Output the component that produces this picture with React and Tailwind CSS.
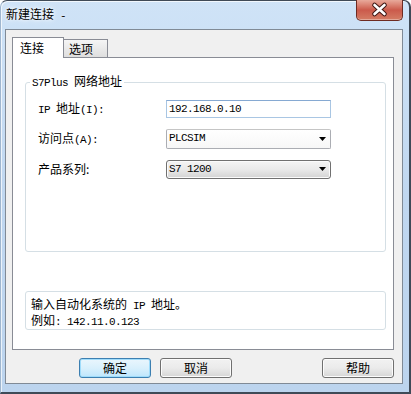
import React from 'react'

// ASCII runs get a half-width mono face, like SimSun's latin
function Mix({ text }) {
  const parts = text.split(/([\x20-\x7e]+)/)
  return parts.map((p, i) =>
    /^[\x20-\x7e]+$/.test(p) ? (
      <span key={i} className="font-['Liberation_Mono',monospace] text-[11px] tracking-[-0.6px]">
        {p}
      </span>
    ) : (
      <React.Fragment key={i}>{p}</React.Fragment>
    )
  )
}

function Arrow() {
  return (
    <svg width="7" height="4" viewBox="0 0 7 4">
      <polygon points="0,0 7,0 3.5,4" fill="#000" />
    </svg>
  )
}

function Button({ label, primary, className = '' }) {
  return (
    <button
      className={`h-[20px] w-[72px] rounded-[3px] border text-[12px] leading-none text-black ${
        primary
          ? 'border-[#3c7fb1] bg-gradient-to-b from-[#eaf6fd] via-[#d9f0fc] to-[#bee6fd] shadow-[inset_0_0_0_1px_#9fdcfb]'
          : 'border-[#707070] bg-gradient-to-b from-[#f2f2f2] via-[#ebebeb] to-[#d6d6d6] shadow-[inset_0_0_0_1px_#fcfcfc]'
      } ${className}`}
    >
      {label}
    </button>
  )
}

export default function App() {
  return (
    <div className="w-[411px] h-[394px] bg-white font-['Noto_Sans_CJK_SC',sans-serif] text-[12px] text-black">
      <div className="flex h-full flex-col rounded-t-[7px] border border-r-2 border-b-2 border-[#3f4a57] border-l-[#9fb6cf] bg-gradient-to-b from-[#cfe3f7] via-[#c0d7f0] to-[#bcd4ee] pl-[4px] pr-[6px] pb-[8px] shadow-[inset_1px_1px_0_rgba(255,255,255,0.7)]">
        {/* 标题栏 */}
        <div className="flex h-[28px] items-start justify-between">
          <span className="self-center pl-[1px] [text-shadow:0_0_6px_#fff,0_0_3px_#fff]">
            <Mix text="新建连接 -" />
          </span>
          <div className="-mt-px h-[21px] w-[47px] rounded-b-[5px] border border-t-0 border-[#6e2b22] bg-gradient-to-b from-[#e8a99b] via-[#cb5a4b] to-[#d47c64] shadow-[inset_0_-1px_0_rgba(255,255,255,0.35)]">
            <svg width="45" height="20" viewBox="0 0 45 20">
              <path d="M17.5 5 L27.5 14 M27.5 5 L17.5 14" stroke="#3b1512" strokeWidth="4.6" strokeLinecap="round" />
              <path d="M17.5 5 L27.5 14 M27.5 5 L17.5 14" stroke="#fff" strokeWidth="2.6" strokeLinecap="round" />
            </svg>
          </div>
        </div>

        {/* 客户区 */}
        <div className="flex flex-1 flex-col border border-[#808a96] bg-[#f0f0f0] pt-[7px]">
          <div className="ml-[6px] mr-[8px]">
            {/* 选项卡 */}
            <div className="relative z-10 -mb-px flex items-end">
              <div className="flex h-[21px] w-[52px] items-center border border-b-0 border-[#898c95] bg-white pl-[7px]">
                连接
              </div>
              <div className="-ml-px mb-px flex h-[18px] w-[45px] items-center border border-b-0 border-[#898c95] bg-gradient-to-b from-[#f5f5f5] to-[#dedede] pl-[5px]">
                选项
              </div>
            </div>

            {/* 面板 */}
            <div className="flex h-[293px] flex-col border border-[#898c95] bg-white pl-[12px] pr-[7px]">
              <fieldset className="mt-[16px] h-[178px] rounded-[3px] border border-[#d5dfe5]">
                <legend className="ml-[4px] px-[2px] leading-[14px]">
                  <Mix text="S7Plus 网络地址" />
                </legend>
                <div className="flex flex-col pl-[12px] pt-[9px]">
                  <div className="flex items-center">
                    <span className="w-[128px]">
                      <Mix text="IP 地址(I):" />
                    </span>
                    <div className="flex h-[18px] w-[165px] items-center border border-[#a9c6e3] border-t-[#86a9d2] bg-white pl-[2px]">
                      <Mix text="192.168.0.10" />
                    </div>
                  </div>
                  <div className="mt-[10px] flex items-center">
                    <span className="w-[128px]">
                      <Mix text="访问点(A):" />
                    </span>
                    <div className="flex h-[20px] w-[165px] items-center justify-between rounded-[2px] border border-[#abadb3] border-t-[#c5c5c5] bg-gradient-to-b from-white to-[#f7f7f7] pl-[2px] pr-[4px]">
                      <Mix text="PLCSIM" />
                      <Arrow />
                    </div>
                  </div>
                  <div className="mt-[11px] flex items-center">
                    <span className="w-[128px]">产品系列:</span>
                    <div className="flex h-[19px] w-[165px] items-center justify-between rounded-[3px] border border-[#707070] bg-gradient-to-b from-[#f4f4f4] via-[#e9e9e9] to-[#d3d3d3] pl-[2px] pr-[4px] shadow-[inset_0_0_0_1px_#fbfbfb]">
                      <Mix text="S7 1200" />
                      <Arrow />
                    </div>
                  </div>
                </div>
              </fieldset>

              <div className="mt-[39px] h-[39px] rounded-[3px] border border-[#d5dfe5] pl-[5px] pt-[5px] leading-[13px]">
                <div>
                  <Mix text="输入自动化系统的 IP 地址。" />
                </div>
                <div>
                  <Mix text="例如: 142.11.0.123" />
                </div>
              </div>
            </div>
          </div>

          {/* 按钮 */}
          <div className="mt-[8px] flex mr-[8px]">
            <Button label="确定" primary className="ml-[73px]" />
            <Button label="取消" className="ml-[9px]" />
            <Button label="帮助" className="ml-auto" />
          </div>
        </div>
      </div>
    </div>
  )
}
